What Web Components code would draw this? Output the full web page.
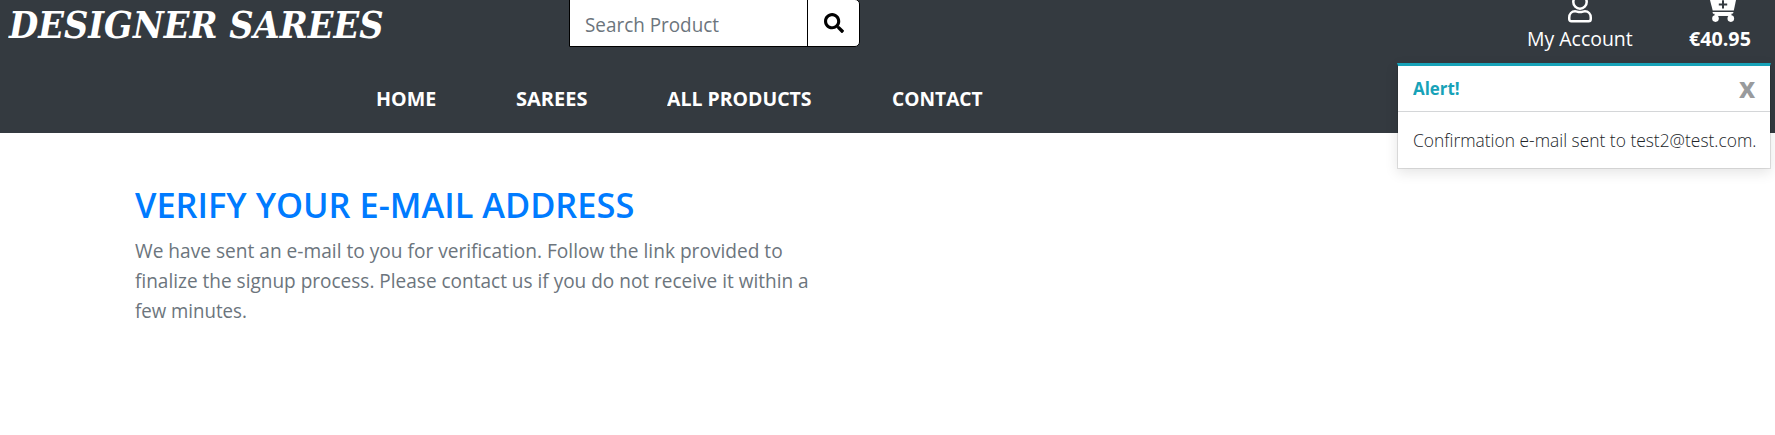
<!DOCTYPE html>
<html lang="en">
<head>
<meta charset="utf-8">
<title>Designer Sarees</title>
<style>
body{margin:0;background:#fff;color:#212529;font-family:"Open Sans","Noto Sans",sans-serif;font-size:20px;overflow:hidden}
</style>
</head>
<body>
<store-page></store-page>
<script>
const define = (name, html, setup) => customElements.define(name, class extends HTMLElement {
  constructor() {
    super();
    this.attachShadow({mode: 'open'}).innerHTML = html;
  }
  connectedCallback() { if (setup) setup(this); }
});

/* One line of text, condensed or widened to fill the width given in "w". */
define('fit-text', `<style>
:host{display:block;white-space:nowrap}
span{display:inline-block;transform-origin:0 50%}
</style><span><slot></slot></span>`, el => {
  const w = +el.getAttribute('w'), s = el.shadowRoot.querySelector('span');
  el.style.width = w + 'px';
  s.style.transform = 'none';
  s.style.transform = `scaleX(${(w / s.offsetWidth).toFixed(4)})`;
});

define('brand-logo', `<style>
:host{display:block;margin:0 0 0 9px;color:#fff;font:italic bold 38px/50px "DejaVu Serif Condensed","DejaVu Serif",serif;font-stretch:condensed}
</style><fit-text w="375">DESIGNER SAREES</fit-text>`);

define('search-box', `<style>
:host{display:flex;box-sizing:border-box;width:291px;height:48px;margin-top:-1px;background:#fff;border:1px solid #000;border-radius:0 5px 5px 0;color:#6c757d}
.field{flex:1;padding:3px 0 0 15px;line-height:44px}
.go{width:51px;border-left:1px solid #000;display:flex;justify-content:center;align-items:center}
svg{display:block}
</style><div class="field"><fit-text w="134">Search Product</fit-text></div>
<div class="go"><svg width="20" height="20" viewBox="0 0 512 512"><path d="M505 442.700 405.300 343c-4.500-4.500-10.600-7-17-7H372c27.600-35.300 44-79.700 44-128C416 93.100 322.900 0 208 0S0 93.100 0 208s93.100 208 208 208c48.300 0 92.700-16.400 128-44v16.300c0 6.400 2.500 12.500 7 17l99.700 99.700c9.400 9.400 24.600 9.400 33.900 0l28.300-28.300c9.400-9.400 9.400-24.600.1-34zM208 336c-70.700 0-128-57.200-128-128 0-70.700 57.200-128 128-128 70.700 0 128 57.200 128 128 0 70.700-57.200 128-128 128z"/></svg></div>`);

define('header-link', `<style>
:host{display:flex;flex-direction:column;align-items:center;color:#fff}
.label{line-height:32px}
</style><slot name="icon"></slot><div class="label"><slot></slot></div>`);

define('site-nav', `<style>
:host{display:flex;gap:80px;padding-left:376px;color:#fff;font-weight:700;line-height:30px}
</style><fit-text w="60">HOME</fit-text><fit-text w="71">SAREES</fit-text><fit-text w="145">ALL PRODUCTS</fit-text><fit-text w="91">CONTACT</fit-text>`);

define('site-header', `<style>
:host{display:block;height:133px;background:#343a40}
.top{display:grid;grid-template-columns:569px 958px 106px 56px 62px;height:84px;align-items:start}
svg{display:block}
.amount{font-weight:700}
.amount svg{margin-left:5px}
</style>
<div class="top">
<brand-logo></brand-logo><search-box></search-box>
<header-link><svg slot="icon" width="26" height="23" viewBox="0 5 26 23" fill="none" stroke="#fff" stroke-width="2.500"><circle cx="13" cy="7" r="6.700"/><path d="M2.250 24v-1.500c0-3.700 2.500-6.200 5.800-6.200 1.700 0 2.500.8 4.950.8s3.250-.8 4.950-.8c3.300 0 5.800 2.500 5.800 6.200V24c0 1.200-.9 2.250-2.100 2.250H4.350A2.100 2.100 0 0 1 2.250 24z"/></svg><fit-text w="106">My Account</fit-text></header-link>
<i></i>
<header-link class="amount"><svg slot="icon" width="30" height="23" viewBox="0 0 30 23"><path fill="#fff" d="M2 0h26l-2.200 10.600H4.700z"/><path fill="#fff" d="M4.500 12h21l-.5 1.500-2 .3v2H7.500v-2H5z"/><circle cx="7.500" cy="18.600" r="3.300" fill="#fff"/><circle cx="22.800" cy="18.600" r="3.300" fill="#fff"/><path d="M6.500 14.500h17" stroke="#fff" stroke-width="2.800"/><path d="M15 .2v8.400M10.800 4.400h8.400" stroke="#343a40" stroke-width="2"/></svg><fit-text w="62">€40.95</fit-text></header-link>
</div>
<site-nav></site-nav>`);

/* Floats over the header and the page. */
define('toast-alert', `<style>
:host{position:absolute;top:63px;right:4px;width:374px;height:106px;box-sizing:border-box;background:#fff;background-clip:padding-box;border:1px solid rgba(0,0,0,.1);border-top:3px solid #17a2b8;box-shadow:0 4px 12px rgba(0,0,0,.1)}
.head{display:flex;justify-content:space-between;height:45px;padding:0 15px;border-bottom:1px solid #d4d6d8;line-height:44px;color:#17a2b8;font-size:18px;font-weight:700}
.close{color:#999b9d;font-size:28px;line-height:42px}
.body{padding:0 15px;font-size:18px;font-weight:300;line-height:30px;margin-top:13px;color:#212529}
</style><div class="head"><fit-text w="47">Alert!</fit-text><div class="close"><fit-text w="16">x</fit-text></div></div>
<div class="body"><fit-text w="343">Confirmation e-mail sent to test2@test.com.</fit-text></div>`);

define('verify-message', `<style>
:host{display:block;padding:51px 0 0 135px}
h1{margin:0 0 10px;color:#007bff;font-size:35px;font-weight:600;line-height:42px}
p{margin:0;color:#6c757d;line-height:30px}
</style><h1><fit-text w="499">VERIFY YOUR E-MAIL ADDRESS</fit-text></h1>
<p><fit-text w="648">We have sent an e-mail to you for verification. Follow the link provided to</fit-text>
<fit-text w="674">finalize the signup process. Please contact us if you do not receive it within a</fit-text>
<fit-text w="112">few minutes.</fit-text></p>`);

define('store-page', `<style>:host{display:block;position:relative;height:435px}</style>
<site-header></site-header><verify-message></verify-message><toast-alert></toast-alert>`);
</script>
</body>
</html>
